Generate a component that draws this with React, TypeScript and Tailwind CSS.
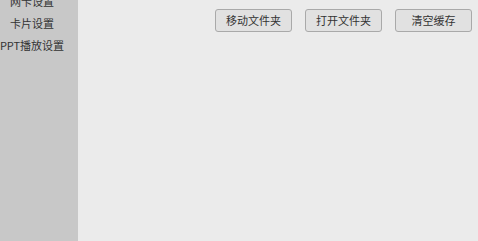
export default function App() {
  const menu = ['网卡设置', '卡片设置', 'PPT播放设置'];
  const actions = ['移动文件夹', '打开文件夹', '清空缓存'];

  return (
    <div
      className="flex h-[241px] w-[478px] overflow-hidden bg-[#ebebeb] text-[11px] text-[#333333]"
      style={{ fontFamily: '"Noto Sans CJK SC", "Noto Sans", sans-serif' }}
    >
      {/* Sidebar */}
      <div className="w-[78px] shrink-0 overflow-hidden bg-[#c8c8c8]">
        <div className="-mt-[10px] flex w-[64px] flex-col">
          {menu.map((item) => (
            <div key={item} className="flex h-[22px] items-center justify-center whitespace-nowrap">
              {item}
            </div>
          ))}
        </div>
      </div>

      {/* Content */}
      <div className="flex-1">
        <div className="flex justify-end gap-[13px] pr-[6px] pt-[9px]">
          {actions.map((label) => (
            <button
              key={label}
              className="h-[23px] w-[77px] rounded-[3px] border border-[#a9a9a9] bg-[#e1e1e1] text-[11px] leading-none text-[#333333]"
            >
              {label}
            </button>
          ))}
        </div>
      </div>
    </div>
  );
}
